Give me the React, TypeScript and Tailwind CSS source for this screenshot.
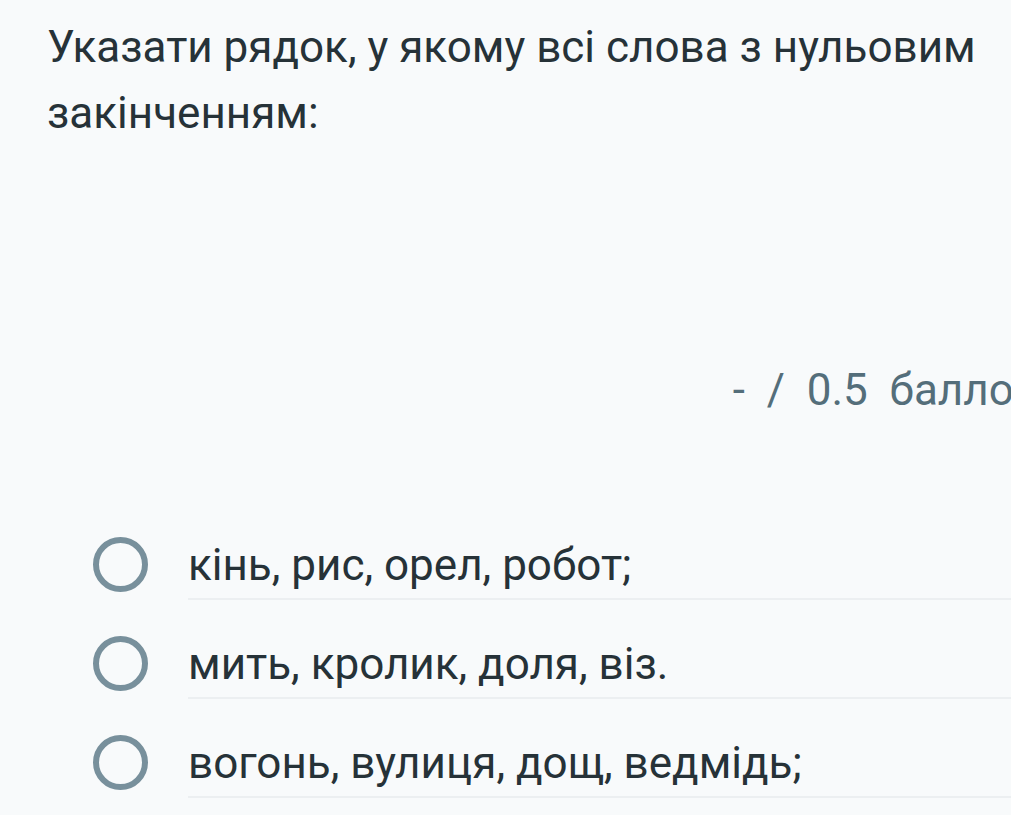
import { FC } from "react";

const options = [
  "кінь, рис, орел, робот;",
  "мить, кролик, доля, віз.",
  "вогонь, вулиця, дощ, ведмідь;",
];

const App: FC = () => {
  return (
    <div
      className="min-h-[815px] w-full overflow-hidden bg-[#f8fafb] pl-[47px] pt-[14px] text-[#263238]"
      style={{ fontFamily: "Roboto, 'Noto Sans', sans-serif" }}
    >
      <h1 className="pr-[30px] text-[44px] leading-[66px] font-normal">
        Указати рядок, у якому всі слова з нульовим закінченням:
      </h1>

      <div className="mt-[211px] flex justify-end whitespace-nowrap text-[44px] leading-[66px] text-[#546e7a]">
        <span className="mr-[-28px]">-&nbsp; /&nbsp; 0.5&nbsp; баллов</span>
      </div>

      <div className="mt-[109px] flex flex-col gap-[31px]">
        {options.map((text) => (
          <label key={text} className="flex items-start">
            <span className="ml-[46px] mt-[5px] h-[55px] w-[55px] shrink-0 rounded-full border-[6px] border-[#78909c]" />
            <span className="ml-[40px] flex-1 whitespace-nowrap border-b-2 border-[#eceff1] text-[44px] leading-[66px]">
              {text}
            </span>
          </label>
        ))}
      </div>
    </div>
  );
};

export default App;
